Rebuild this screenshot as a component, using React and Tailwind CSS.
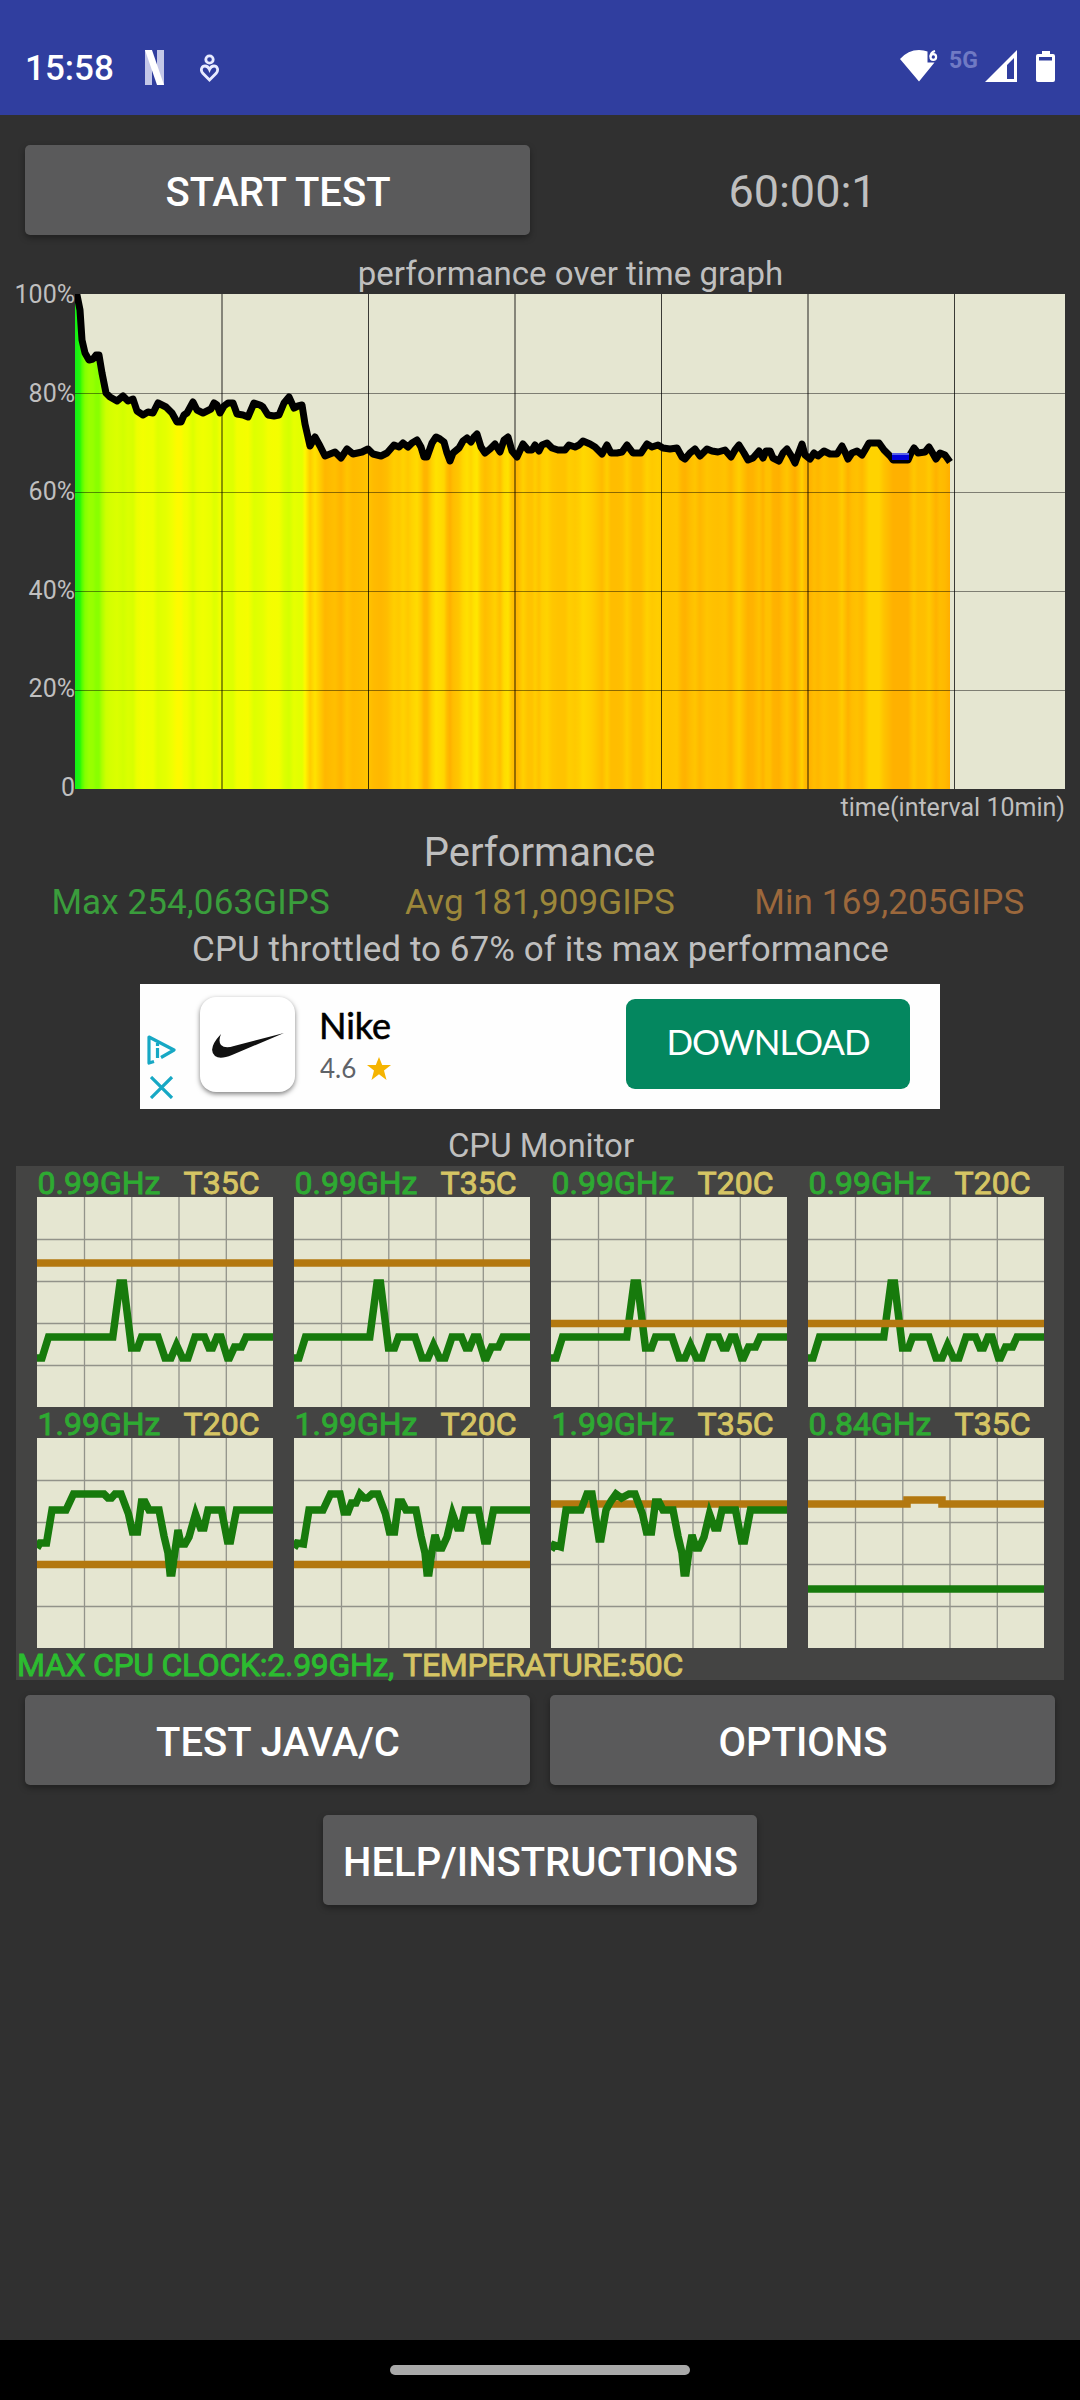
import React from 'react';

const MAIN_LINE = [
  [76, 290], [80, 310], [82, 340], [85, 353], [89, 360], [93, 359], [96, 355], [99, 355], [102, 373], [106, 393],
  [110, 397], [117, 401], [123, 396], [128, 401], [133, 399], [137, 411], [143, 415], [148, 412], [153, 413], [158, 403],
  [166, 407], [172, 413], [177, 422], [181, 422], [184, 415], [187, 413], [193, 402], [197, 410], [203, 413], [211, 409],
  [214, 403], [217, 405], [220, 413], [224, 406], [228, 403], [233, 403], [237, 414], [243, 415], [248, 417], [254, 403],
  [260, 405], [263, 407], [268, 415], [274, 416], [279, 415], [284, 403], [289, 397], [294, 408], [298, 406], [302, 405],
  [305, 424], [310, 446], [315, 437], [320, 446], [325, 456], [330, 454], [335, 452], [341, 458], [347, 449], [353, 454],
  [362, 452], [368, 449], [373, 454], [381, 456], [387, 453], [394, 445], [399, 447], [403, 443], [408, 447], [412, 443],
  [417, 440], [421, 447], [424, 457], [427, 457], [432, 443], [436, 437], [440, 439], [444, 442], [447, 453], [450, 461],
  [453, 453], [459, 448], [463, 441], [467, 438], [471, 442], [474, 437], [477, 434], [481, 447], [485, 453], [490, 449],
  [495, 444], [500, 452], [504, 440], [508, 437], [512, 451], [517, 457], [523, 444], [528, 450], [532, 450], [535, 445],
  [539, 451], [542, 445], [547, 443], [552, 448], [558, 450], [565, 450], [569, 445], [575, 447], [579, 445], [583, 441],
  [590, 444], [595, 447], [602, 454], [607, 445], [611, 453], [617, 453], [622, 452], [627, 445], [633, 453], [641, 453],
  [647, 444], [652, 447], [658, 445], [663, 448], [670, 449], [677, 448], [682, 457], [685, 459], [690, 453], [695, 449],
  [700, 456], [707, 449], [712, 451], [718, 452], [725, 450], [731, 457], [735, 450], [739, 445], [744, 453], [748, 460],
  [753, 458], [759, 451], [763, 458], [766, 451], [770, 451], [773, 458], [779, 461], [783, 453], [787, 449], [792, 457],
  [795, 463], [799, 452], [802, 444], [805, 455], [810, 459], [814, 453], [818, 456], [824, 451], [830, 454], [837, 454],
  [842, 446], [845, 452], [848, 459], [852, 453], [857, 451], [862, 455], [865, 450], [869, 443], [879, 443], [884, 450],
  [890, 456], [893, 460], [908, 460], [911, 453], [914, 448], [918, 453], [925, 452], [929, 447], [932, 452], [936, 459],
  [940, 453], [945, 455], [950, 462],
].map(([x, y]) => [x - 75, y - 294]);

// percentage -> fill colour under the graph
const HEAT = [
  [100, 20, 240, 20],
  [92, 60, 255, 0],
  [87, 150, 255, 0],
  [80, 205, 255, 0],
  [78, 222, 255, 0],
  [76, 240, 255, 0],
  [74, 255, 250, 0],
  [71, 255, 225, 0],
  [69, 255, 200, 0],
  [67, 255, 180, 0],
  [65, 255, 168, 0],
];

const heatColor = (pct) => {
  if (pct >= 100) return 'rgb(20,240,20)';
  for (let i = 1; i < HEAT.length; i++) {
    const [hi, r1, g1, b1] = HEAT[i - 1];
    const [lo, r2, g2, b2] = HEAT[i];
    if (pct >= lo) {
      const t = (hi - pct) / (hi - lo);
      return `rgb(${Math.round(r1 + (r2 - r1) * t)},${Math.round(g1 + (g2 - g1) * t)},${Math.round(b1 + (b2 - b1) * t)})`;
    }
  }
  return 'rgb(255,168,0)';
};

const toPoints = (pts) => pts.map((p) => p.join(',')).join(' ');

const LITTLE = [
  [0, 161], [5, 161], [11.5, 140], [75.8, 140], [83, 86], [86.5, 86], [94.5, 151], [100.5, 151], [104.5, 140],
  [121, 140], [128, 161], [134, 161], [139.5, 148], [145.5, 161], [151, 161], [158, 140], [167.5, 140], [172, 151],
  [175.5, 151], [180, 140], [184, 140], [190.5, 161], [192.5, 161], [197.5, 150], [204.5, 150], [209, 140], [237, 140],
];
const DIP = [[84, 56], [91.5, 76], [95.5, 94], [100.5, 94], [104.5, 64], [108, 64], [112, 72], [122, 72], [127, 98], [131, 115], [133, 135], [135, 135], [138, 113]];
const TAIL = [[158.5, 76], [163.5, 90], [167, 90], [171, 72], [184.5, 72], [190.5, 103], [193.5, 103], [199.5, 72], [237, 72]];
const BIG_A = [
  [0, 110], [3, 105], [9.5, 105], [15, 72], [29, 72], [36.5, 56], [67, 56], [71, 60], [74.5, 60], [78, 56],
  ...DIP, [141, 92], [144, 106], [148, 106], [152, 99], ...TAIL,
];
const BIG_B = [
  [0, 110], [3, 105], [9.5, 106], [15, 72], [29, 72], [36.5, 56], [46, 56], [50, 74], [54, 74], [57.5, 65],
  [62, 65], [66, 56], [70, 60], [73.5, 60], [78, 56],
  ...DIP, [141, 97], [145, 110], [148, 110], [153, 99], ...TAIL,
];
const BIG_C = [
  [0, 112], [3, 107], [9.5, 109], [15, 72], [30, 72], [36, 56], [41, 56], [48, 101], [50, 101], [55, 72], [60, 63],
  [65, 56], [70.5, 60], [78, 56],
  ...DIP, [141, 97], [145, 110], [148, 110], [153, 99], ...TAIL,
];
const T35 = [[0, 66], [237, 66]];
const T20 = [[0, 126.5], [237, 126.5]];
const T35_BUMP = [[0, 66], [99, 66], [99, 62], [134, 62], [134, 66], [237, 66]];

const CORES = [
  { clock: '0.99GHz', temp: 'T35C', line: LITTLE, heat: T35 },
  { clock: '0.99GHz', temp: 'T35C', line: LITTLE, heat: T35 },
  { clock: '0.99GHz', temp: 'T20C', line: LITTLE, heat: T20 },
  { clock: '0.99GHz', temp: 'T20C', line: LITTLE, heat: T20 },
  { clock: '1.99GHz', temp: 'T20C', line: BIG_A, heat: T20 },
  { clock: '1.99GHz', temp: 'T20C', line: BIG_B, heat: T20 },
  { clock: '1.99GHz', temp: 'T35C', line: BIG_C, heat: T35 },
  { clock: '0.84GHz', temp: 'T35C', line: [[0, 151], [237, 151]], heat: T35_BUMP },
];

const StatusBar = () => (
  <header className="flex h-[115px] items-start justify-between bg-[#303e9f] text-white">
    <div className="flex items-center pl-[25px] pt-[47px]">
      <span className="w-[120px] pt-[2px] text-[35px] leading-[39px] font-medium">15:58</span>
      <svg width="19" height="35" viewBox="0 0 19 35">
        <path d="M0 0h7v35H0zM12 0h7v35h-7z" fill="#c3c7e8" />
        <path d="M0 0h7l12 35h-7z" fill="#fff" />
      </svg>
      <svg className="ml-9" width="20" height="28" viewBox="0 0 20 28" fill="none" stroke="#e8ebff" strokeWidth="2.8">
        <circle cx="9.5" cy="5.5" r="3.7" />
        <path d="M9.5 26 L2.6 19 C0 15.5 2 12 5 12 C7.5 12 8.6 13.5 9.5 15.5 C10.4 13.5 11.5 12 14 12 C17 12 19 15.5 16.4 19 Z" />
      </svg>
    </div>
    <div className="flex items-start pr-[25px] pt-[50px]">
      <svg width="38" height="32" viewBox="0 0 38 32">
        <path d="M0 9 Q8 0 19 0 Q24 0 27.500 1.500 V12.500 H34.500 L19 31.500 Z" fill="#fff" />
        <path d="M35 1 C31.500 2 30.500 4 30.500 6.800" fill="none" stroke="#fff" strokeWidth="2.2" />
        <circle cx="33.3" cy="7" r="2.8" fill="none" stroke="#fff" strokeWidth="2.2" />
      </svg>
      <span className="ml-[11px] w-[36px] pt-[1px] text-[23px] leading-[19px] font-bold text-[#707ac4]">5G</span>
      <svg width="32" height="32" viewBox="0 0 32 32">
        <path fillRule="evenodd" d="M32 0V32H0ZM29 8L22 15V29H29Z" fill="#fff" />
      </svg>
      <svg className="ml-[19px]" width="19" height="32" viewBox="0 0 19 32">
        <path fillRule="evenodd" d="M6 1h8v3h3a2 2 0 0 1 2 2v24a2 2 0 0 1-2 2H2a2 2 0 0 1-2-2V6a2 2 0 0 1 2-2h4zM3 7v3.5h13V7z" fill="#fff" />
      </svg>
    </div>
  </header>
);

const Button = ({ className, children }) => (
  <button className={`h-[90px] rounded-[5px] bg-[#5a5a5b] pt-[4px] pl-[1px] text-[40px] leading-[47px] font-medium text-white shadow-[0_3px_6px_rgba(0,0,0,0.35)] ${className}`}>
    {children}
  </button>
);

const PerformanceGraph = () => (
  <div className="flex h-[495px]">
    <div className="-mt-[14px] -mb-[14px] flex w-[75px] flex-col justify-between text-right text-[25px] leading-[30px]">
      {['100%', '80%', '60%', '40%', '20%', '0'].map((label) => (
        <span key={label}>{label}</span>
      ))}
    </div>
    <svg width="990" height="495" viewBox="0 0 990 495" className="bg-[#e5e6d1]">
      <defs>
        <linearGradient id="heat" gradientUnits="userSpaceOnUse" x1="0" y1="0" x2="875" y2="0">
          {MAIN_LINE.map(([x, y]) => (
            <stop key={x} offset={x / 875} stopColor={heatColor(100 - y / 4.95)} />
          ))}
        </linearGradient>
      </defs>
      <polygon points={`0,495 0,0 ${toPoints(MAIN_LINE)} 875,495`} fill="url(#heat)" />
      <polyline points={toPoints(MAIN_LINE)} fill="none" stroke="#000" strokeWidth="7" strokeLinejoin="round" />
      <rect x="817" y="159" width="17" height="7" fill="#0000d8" />
      <rect x="817" y="159" width="17" height="2" fill="#5a62e8" />
      {[99, 198, 297, 396].map((y) => (
        <rect key={y} x="0" y={y} width="990" height="1" fill="#000" fillOpacity="0.45" />
      ))}
      {[146, 439, 732].map((x) => (
        <rect key={x} x={x} y="0" width="2" height="495" fill="#000" fillOpacity="0.42" />
      ))}
      {[293, 586, 879].map((x) => (
        <rect key={x} x={x} y="0" width="1" height="495" fill="#000" fillOpacity="0.75" />
      ))}
    </svg>
  </div>
);

const AdBanner = () => (
  <div className="mx-auto mt-[14px] flex h-[125px] w-[800px] bg-[#fefefe]">
    <div className="flex w-[60px] flex-col items-start gap-[11px] pl-[7px] pt-[51px]">
      <svg width="29" height="30" viewBox="0 0 29 30" fill="none" stroke="#17a8c4" strokeWidth="3.2" strokeLinejoin="round">
        <path d="M7 26.500 L2 28 V2 L27 15 L14 22.500" />
        <path d="M10.500 13v10" />
        <path d="M10.500 8v3" />
      </svg>
      <svg className="ml-[3px]" width="24" height="23" viewBox="0 0 24 23" stroke="#17a8c4" strokeWidth="3.2">
        <path d="M1 1 L22 22 M22 1 L1 22" />
      </svg>
    </div>
    <div className="mt-[13px] flex h-[95px] w-[95px] items-center justify-center rounded-[16px] bg-white shadow-[0_2px_5px_rgba(0,0,0,0.5)]">
      <svg width="72" height="26" viewBox="0 0 72 26" className="mt-[3px]">
        <path d="M72 0 L20 22 Q8 27 3 23 Q-5 16 9 1 Q6 8 9 12 Q13 16 22 13 Z" fill="#111" />
      </svg>
    </div>
    <div className="ml-[24px] w-[307px] pt-[20px] font-[Lato,sans-serif]">
      <div className="text-[36px] leading-[42px] text-black [-webkit-text-stroke:0.6px_#000]">Nike</div>
      <div className="mt-[5px] flex items-center gap-[11px] pl-[1px] text-[26px] leading-[34px] text-[#5f6368]">
        4.6
        <svg width="24" height="23" viewBox="0 0 24 23">
          <path d="M12 0l3.200 8H24l-7 5.400L19.500 23 12 17.300 4.500 23 7 13.400 0 8h8.800z" fill="#f5b400" />
        </svg>
      </div>
    </div>
    <button className="mt-[15px] h-[90px] w-[284px] rounded-[9px] bg-[#04875f] pb-[5px] font-[Lato,sans-serif] text-[35px] tracking-[-1.1px] text-white">
      DOWNLOAD
    </button>
  </div>
);

const CoreChart = ({ core }) => {
  const clockLine = <polyline points={toPoints(core.line)} fill="none" stroke="#177a0c" strokeWidth="7.5" strokeLinejoin="miter" />;
  const tempLine = <polyline points={toPoints(core.heat)} fill="none" stroke="#b3780f" strokeWidth="7.5" />;
  const tempOnTop = core.line === LITTLE;

  return (
    <div className="w-[236px]">
      <div className="flex h-[31px] items-center justify-between pl-[1px] pr-[13px] pt-[4px] text-[32px] leading-[27px]">
        <span className="text-[#2eaa32] [-webkit-text-stroke:0.9px_#2eaa32]">{core.clock}</span>
        <span className="text-[#d6c564] [-webkit-text-stroke:0.9px_#d6c564]">{core.temp}</span>
      </div>
      <svg width="236" height="210" viewBox="0 0 236 210" className="block bg-[#e5e6d1]">
        <path d="M47.500 0V210M94.800 0V210M142 0V210M189.300 0V210M0 42.500H237M0 84.500H237M0 126.500H237M0 168.500H237" stroke="#92938a" strokeWidth="1.3" />
        {tempOnTop ? clockLine : tempLine}
        {tempOnTop ? tempLine : clockLine}
      </svg>
    </div>
  );
};

const CpuMonitor = () => (
  <section className="mx-4 flex h-[514px] flex-col bg-[#444443]">
    <div className="grid grid-cols-[repeat(4,236px)] gap-x-[21px] pl-[20.5px]">
      {CORES.map((core, i) => (
        <CoreChart key={i} core={core} />
      ))}
    </div>
    <div className="flex h-[32px] items-center gap-[9px] pl-[1px] pt-[1px] text-[32px] leading-[32px] tracking-[-0.3px] whitespace-nowrap">
      <span className="text-[#2cbc30] [-webkit-text-stroke:0.9px_#2cbc30]">MAX CPU CLOCK:2.99GHz,</span>
      <span className="text-[#d6c564] [-webkit-text-stroke:0.9px_#d6c564]">TEMPERATURE:50C</span>
    </div>
  </section>
);

const App = () => (
  <div className="flex h-[2400px] w-[1080px] flex-col overflow-hidden bg-[#303030] font-[Roboto,sans-serif] text-[#bfbfbf]">
    <StatusBar />
    <main className="flex flex-1 flex-col">
      <div className="flex items-center pl-[25px] pt-[30px]">
        <Button className="w-[505px]">START TEST</Button>
        <div className="ml-[10px] flex-1 pr-[15px] pt-[4px] text-center text-[45px] leading-[52px]">60:00:1</div>
      </div>
      <div className="mt-[18px] h-[41px] pl-[76px] pr-[15px] text-center text-[33px] leading-[41px]">performance over time graph</div>
      <PerformanceGraph />
      <div className="h-[41px] pr-[15px] text-right text-[25px] leading-[37px]">time(interval 10min)</div>
      <div className="h-[47px] pr-[1px] text-center text-[40px] leading-[46px]">Performance</div>
      <div className="mx-4 grid h-[52px] grid-cols-3 text-center text-[35px] leading-[52px] tracking-[0.12px]">
        <span className="text-[#3a9d3c]">Max 254,063GIPS</span>
        <span className="text-[#9c873a]">Avg 181,909GIPS</span>
        <span className="text-[#9c683c]">Min 169,205GIPS</span>
      </div>
      <div className="h-[41px] pl-[1px] text-center text-[35px] leading-[41px] tracking-[0.07px]">CPU throttled to 67% of its max performance</div>
      <AdBanner />
      <div className="mt-[16px] h-[41px] pl-[2px] text-center text-[33px] leading-[41px]">CPU Monitor</div>
      <CpuMonitor />
      <div className="mt-[15px] flex gap-5 px-[25px]">
        <Button className="flex-1">TEST JAVA/C</Button>
        <Button className="flex-1">OPTIONS</Button>
      </div>
      <Button className="mx-auto mt-[30px] w-[434px]">HELP/INSTRUCTIONS</Button>
    </main>
    <footer className="flex h-[60px] items-center justify-center bg-black">
      <div className="h-[10px] w-[300px] rounded-full bg-[#a9a9a9]" />
    </footer>
  </div>
);

export default App;
